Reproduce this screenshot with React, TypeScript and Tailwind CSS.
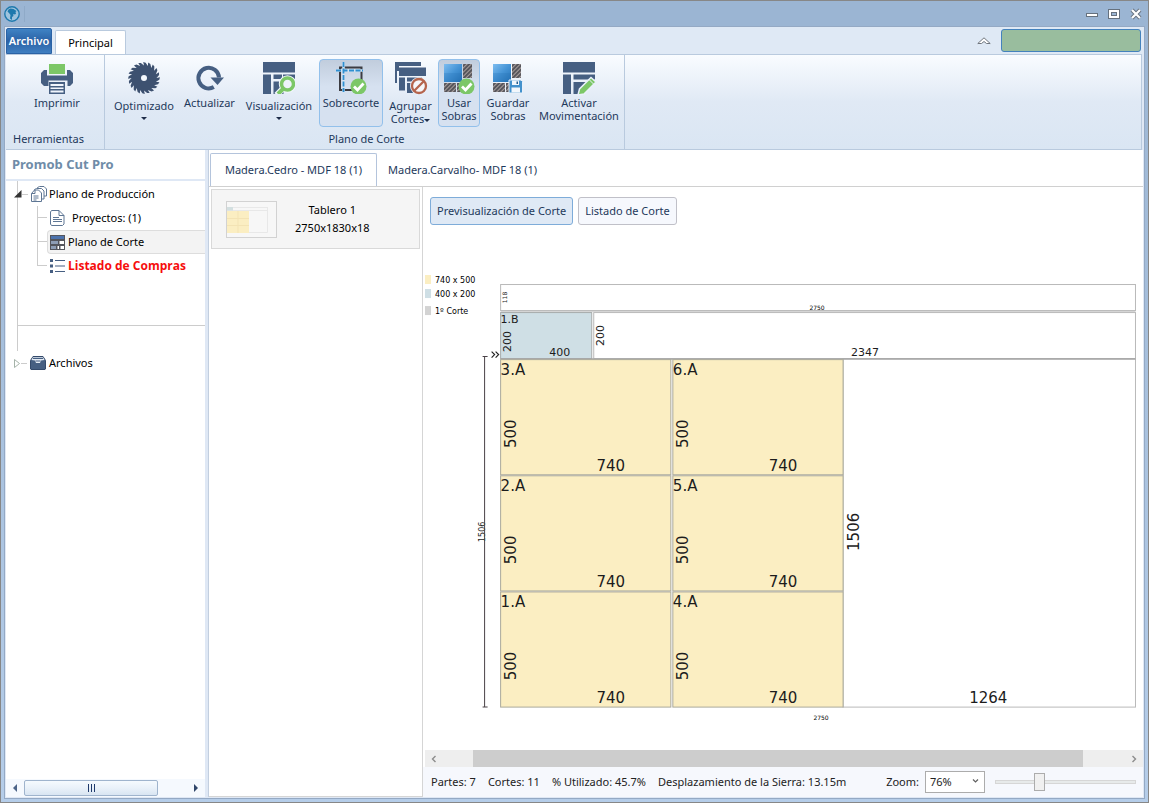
import React, { useState } from 'react';

const NAVY = '#465f82';

const PrinterIcon = () => (
  <svg width="32" height="32" viewBox="0 0 32 32">
    <rect x="8" y="2" width="16" height="10" fill="#7cc767" />
    <path d="M3 8h3v5.500h20V8h3l3 3v10l-3 3h-2.500v-5.500h-19V24H3l-3-3V11z" fill={NAVY} />
    <path d="M8 20h16v12H8z" fill={NAVY} />
    <path d="M9.500 22h13v2h-13zM9.500 25.500h13v1.500h-13zM9.500 28.500h13v2h-13z" fill="#f0f5fc" />
  </svg>
);

const SAW_TEETH = 20;

const sawPath = Array.from({ length: SAW_TEETH }, (_, i) => {
  const a = (i / SAW_TEETH) * Math.PI * 2;
  const b = a + (Math.PI * 2 / SAW_TEETH) * 0.35;
  const point = (angle: number, r: number) =>
    `${(16 + Math.cos(angle) * r).toFixed(2)} ${(16 + Math.sin(angle) * r).toFixed(2)}`;
  return `${i === 0 ? 'M' : 'L'}${point(a, 12.5)}L${point(a - 0.05, 16)}L${point(b, 15.4)}`;
}).join('') + 'Z';

const SawIcon = () => (
  <svg width="32" height="32" viewBox="0 0 32 32">
    <path d={sawPath} fill="#3d5170" />
    <circle cx="16" cy="16" r="3" fill="#f4f8fd" />
  </svg>
);

const RefreshIcon = () => (
  <svg width="32" height="32" viewBox="0 0 32 32">
    <path d="M19.800 25.100A10.300 10.300 0 1 1 25 15.500" fill="none" stroke={NAVY} strokeWidth="4" />
    <path d="M16.500 15.500h13.500l-6.500 7.500z" fill={NAVY} />
  </svg>
);

const ViewIcon = () => (
  <svg width="32" height="32" viewBox="0 0 32 32">
    <path d="M0 0h32v10.500H0zM0 12.500h8v19.500H0zM10.500 12.500H19v4.500h-8.500zM20 12.500h12v5H20zM10.500 19.500h10V32h-10z" fill={NAVY} />
    <circle cx="24.500" cy="22" r="6" fill="none" stroke="#f3f7fd" strokeWidth="5.500" />
    <path d="M20.500 26l-7 7" stroke="#f3f7fd" strokeWidth="6" />
    <circle cx="24.500" cy="22" r="6" fill="#edf3fb" stroke="#7cc767" strokeWidth="3.500" />
    <path d="M20.500 26.500L15 32" stroke="#7cc767" strokeWidth="4" />
  </svg>
);

const CheckBadge = () => (
  <>
    <circle cx="23.500" cy="24.500" r="8" fill="#7cc767" />
    <path d="M19 24.500l3.500 3.500 6-6.500" fill="none" stroke="#fff" strokeWidth="2.800" />
  </>
);

const OvercutIcon = () => (
  <svg width="32" height="32" viewBox="0 0 32 32">
    <path d="M5 5.500h21.500V28H5z" fill="none" stroke="#3c3c42" strokeWidth="2" />
    <path d="M8.500 0v30M1 8.500h27" fill="none" stroke="#d3e4f3" strokeWidth="2.500" />
    <path d="M8.500 0v30M1 8.500h27" fill="none" stroke="#2f8fd0" strokeWidth="1.800" strokeDasharray="5 1.500" />
    <CheckBadge />
  </svg>
);

const GroupCutsIcon = () => (
  <svg width="34" height="34" viewBox="0 0 34 34">
    <path d="M1 0h26v4H5v5H3v12H1z" fill={NAVY} />
    <path d="M5 5.500h27v8.500H5zM5 15.500h6v13H5zM13 15.500h15v4H13zM13 21h6v10h-6z" fill={NAVY} />
    <circle cx="25" cy="24" r="9" fill="#eaf1fa" />
    <circle cx="25" cy="24" r="7" fill="#f5f7fa" stroke="#b5654d" strokeWidth="2.300" />
    <path d="M20 29L30 19" stroke="#b5654d" strokeWidth="2.300" />
  </svg>
);

const Hatch = ({ x, y, w, h }: { x: number; y: number; w: number; h: number }) => (
  <>
    <rect x={x} y={y} width={w} height={h} fill="#57565c" />
    <rect x={x} y={y} width={w} height={h} fill="url(#hatch)" />
  </>
);

const LeftoverBase = () => (
  <>
    <defs>
      <pattern id="hatch" width="3" height="3" patternUnits="userSpaceOnUse" patternTransform="rotate(45)">
        <rect width="1" height="3" fill="#aaa09e" />
      </pattern>
      <linearGradient id="sheet" x1="0" y1="0" x2="1" y2="1">
        <stop offset="0" stopColor="#7dbdf0" />
        <stop offset="0.500" stopColor="#4594d6" />
        <stop offset="1" stopColor="#2370b4" />
      </linearGradient>
    </defs>
    <rect x="1" y="2" width="18" height="18" fill="url(#sheet)" />
    <path d="M1 11h18v9H1z" fill="#2370b4" opacity="0.250" />
    <Hatch x={20} y={2} w={9} h={14} />
    <Hatch x={1} y={21} w={12} h={9} />
    <Hatch x={14} y={21} w={5} h={9} />
  </>
);

const UseLeftoversIcon = () => (
  <svg width="32" height="32" viewBox="0 0 32 32">
    <LeftoverBase />
    <CheckBadge />
  </svg>
);

const SaveLeftoversIcon = () => (
  <svg width="32" height="32" viewBox="0 0 32 32">
    <LeftoverBase />
    <path d="M17 18h12l1.500 1.500V31H17z" fill="#4391cc" stroke="#e8f0fa" />
    <path d="M20 18.500h7V23h-7zM19.500 25.500h8.500V30.500h-8.500z" fill="#f2f7fc" />
    <path d="M24.500 19.500h1.500v2.500h-1.500z" fill="#245e90" />
  </svg>
);

const MoveIcon = () => (
  <svg width="34" height="34" viewBox="0 0 34 34">
    <path d="M1 0h32v10.500H1zM1 12.500h8v19.500H1zM11.500 12.500H33v5H11.500zM11.500 20h13v4l-6 8h-7z" fill={NAVY} />
    <path d="M16 33l1.500-6L29 15.500l5 4.500-12 12z" fill="#7cc767" stroke="#eaf1fa" strokeWidth="1.500" />
    <path d="M27 17.500l4.500 4.500" stroke="#eaf1fa" />
  </svg>
);

const AppLogo = () => (
  <svg width="16" height="16" viewBox="0 0 16 16">
    <circle cx="8" cy="8" r="7.200" fill="#9ec3dd" stroke="#1e79ad" strokeWidth="1.400" />
    <path d="M3.500 5.500l1-2 2-1 3 .5 3 2-1 1 .5 2-2 .500-1-.500.500 2-1.500 1v3L6 12.500 6.500 9 5 7z" fill="#1e79ad" />
  </svg>
);

const PagesIcon = () => (
  <svg width="16" height="16" viewBox="0 0 16 16" fill="#fff" stroke="#5e7694">
    <path d="M6.500 1.500l2-1h4.500l2.500 2.500v7h-9z" />
    <path d="M3.500 3.500l2-1h5l2.500 2.500v8h-9z" />
    <path d="M.5 7.500l3-3.500h4L10.500 7v8.500H.5z" />
    <path d="M.5 7.500H4V4M2.500 10h5M2.500 12h5M2.500 14h3" fill="none" />
  </svg>
);

const PageIcon = () => (
  <svg width="15" height="16" viewBox="0 0 15 16" fill="#fff" stroke="#5e7694">
    <path d="M1.500.5h7.500l5 5v8.500l-1.500 1.500h-11L.5 14V2z" />
    <path d="M9 .5v5h5M3 7.500h6M3 9.500h9M3 11.500h9" fill="none" />
  </svg>
);

const LayoutIcon = () => (
  <svg width="15" height="15" viewBox="0 0 15 15">
    <rect width="15" height="15" fill="#54555c" />
    <path d="M1 1h13v3H1z" fill="#4d73ad" />
    <path d="M1 6h7v3H1zM1 11h5v3H1z" fill="#8e9db5" />
    <path d="M9.500 6h4.500v3H9.500zM7.500 11H9v3H7.500zM10.500 11H14v3h-3.500z" fill="#fff" />
  </svg>
);

const ListIcon = () => (
  <svg width="15" height="14" viewBox="0 0 15 14" fill={NAVY}>
    <path d="M0 0h3v3H0zM0 5.500h3v3H0zM0 11h3v3H0zM5 1h10v1H5zM5 6.500h10v1H5zM5 12h10v1H5z" />
  </svg>
);

const ArchiveIcon = () => (
  <svg width="16" height="14" viewBox="0 0 16 14">
    <path d="M3 .5h10l2.500 4v8.500l-.5.500H1l-.5-.5V4.500z" fill={NAVY} stroke="#344a6b" />
    <path d="M3 1.200h10l1.500 2.800-3.500.5L10 7H6L5 4.500 1.500 4z" fill="#e4ebf4" />
    <path d="M3 2.500h10M5.500 5h5" stroke={NAVY} strokeWidth="1.200" />
  </svg>
);

const Caret = () => (
  <svg width="6" height="3" viewBox="0 0 6 3" className="inline-block align-middle">
    <path d="M0 0h6L3 3z" fill="#1e2c48" />
  </svg>
);

type Tool = {
  label: string[];
  icon: React.ReactNode;
  width: string;
  active?: boolean;
  menu?: 'below' | 'inline';
};

const cutTools: Tool[] = [
  { label: ['Optimizado'], icon: <SawIcon />, width: 'w-[66px]', menu: 'below' },
  { label: ['Actualizar'], icon: <RefreshIcon />, width: 'w-[59px]' },
  { label: ['Visualización'], icon: <ViewIcon />, width: 'w-[74px]', menu: 'below' },
  { label: ['Sobrecorte'], icon: <OvercutIcon />, width: 'w-[64px]', active: true },
  { label: ['Agrupar', 'Cortes'], icon: <GroupCutsIcon />, width: 'w-[49px]', menu: 'inline' },
  { label: ['Usar', 'Sobras'], icon: <UseLeftoversIcon />, width: 'w-[42px]', active: true },
  { label: ['Guardar', 'Sobras'], icon: <SaveLeftoversIcon />, width: 'w-[50px]' },
  { label: ['Activar', 'Movimentación'], icon: <MoveIcon />, width: 'w-[86px]' },
];

const ToolButton = ({ tool }: { tool: Tool }) => (
  <button
    className={`flex h-[68px] shrink-0 flex-col items-center rounded-sm border pt-0.5 leading-[13px] whitespace-nowrap ${tool.width} ${
      tool.active
        ? 'border-[#92c0eb] bg-linear-to-b from-[#c1cddd] to-[#d6e1f0] to-40%'
        : 'border-transparent'
    }`}
  >
    <span className="flex h-8 items-start justify-center">{tool.icon}</span>
    <span className={tool.menu ? 'mt-[5px]' : 'mt-0.5'}>
      {tool.label.map((line, i) => (
        <span key={line} className="block">
          {line}
          {tool.menu === 'inline' && i === tool.label.length - 1 && <Caret />}
        </span>
      ))}
    </span>
    {tool.menu === 'below' && <span className="mt-[5px] flex"><Caret /></span>}
  </button>
);

const TitleBar = () => (
  <header className="flex h-[25px] shrink-0 items-center justify-between bg-[#9bb5d3] px-[3px]">
    <div className="flex items-center gap-1">
      <AppLogo />
      <span className="h-4 w-px bg-[#8faac8]" />
    </div>
    <div className="flex items-center gap-2 pr-0.5">
      <button aria-label="Minimizar">
        <svg width="14" height="12" viewBox="0 0 14 12">
          <rect x="1.500" y="5.500" width="11" height="3" fill="#fff" stroke="#66717e" />
        </svg>
      </button>
      <button aria-label="Maximizar">
        <svg width="14" height="12" viewBox="0 0 14 12">
          <rect x="1.500" y="1.500" width="11" height="9" fill="#fff" stroke="#66717e" />
          <rect x="4.500" y="4.500" width="5" height="3" fill="#9bb5d3" stroke="#66717e" />
        </svg>
      </button>
      <button aria-label="Cerrar">
        <svg width="14" height="12" viewBox="0 0 14 12">
          <path d="M3 2l8 8M11 2l-8 8" stroke="#66717e" strokeWidth="4" />
          <path d="M3 2l8 8M11 2l-8 8" stroke="#fff" strokeWidth="2.200" />
        </svg>
      </button>
    </div>
  </header>
);

const Ribbon = () => (
  <div className="shrink-0 text-[#1e395b]">
    <div className="flex h-[27px] items-end bg-[#dfe9f5] pr-0.5">
      <button className="mr-[3px] h-[26px] w-[46px] rounded-t-xs border border-[#2a62a5] bg-linear-to-b from-[#3f83c4] via-[#2b62a6] to-[#3f7fc1] font-semibold text-white">
        Archivo
      </button>
      <button className="h-6 w-[71px] rounded-t-xs border border-b-0 border-[#b9cade] bg-white text-black">
        Principal
      </button>
      <div className="ml-auto flex items-center gap-2.5 pb-0.5">
        <button aria-label="Contraer la cinta">
          <svg width="14" height="8" viewBox="0 0 14 8">
            <path d="M.8 6.500L7 .8l6.200 5.700H9.500L7 4.500l-2.500 2z" fill="#fff" stroke="#70767e" />
          </svg>
        </button>
        <div className="h-[23px] w-[140px] rounded-[3px] border border-[#4482bd] bg-[#99bd9e]" />
      </div>
    </div>
    <div className="mr-px flex h-[96px] border-y border-r border-[#b9cade] bg-linear-to-b from-[#f9fcff] via-[#e0e9f5] to-[#dae6f3]">
      <section className="flex w-[99px] shrink-0 flex-col border-r border-[#b9cade] pt-1">
        <div className="pl-[19px]">
          <ToolButton tool={{ label: ['Imprimir'], icon: <PrinterIcon />, width: 'w-[64px]' }} />
        </div>
        <h2 className="mt-1 pl-[7px]">Herramientas</h2>
      </section>
      <section className="flex shrink-0 flex-col border-r border-[#b9cade] px-0.5 pt-1 pl-1.5">
        <div className="flex gap-[3px]">
          {cutTools.map((tool) => <ToolButton key={tool.label.join(' ')} tool={tool} />)}
        </div>
        <h2 className="mt-1 text-center">Plano de Corte</h2>
      </section>
    </div>
  </div>
);

const branch = [
  { label: 'Proyectos: (1)', icon: <PageIcon />, style: 'gap-[7px] pl-[3px]' },
  { label: 'Plano de Corte', icon: <LayoutIcon />, style: 'gap-[3px] rounded-l-sm border border-r-0 border-[#dddddd] bg-[#f3f3f3] pl-0.5' },
  { label: 'Listado de Compras', icon: <ListIcon />, style: "gap-[3px] pl-[3px] font-['Open_Sans',sans-serif] text-[12px] font-bold text-[#f60d0d]" },
];

const Sidebar = () => (
  <aside className="flex w-[202px] shrink-0 flex-col border-r-[3px] border-[#dfe8f5] bg-white">
    <h1 className="border-b-2 border-[#dfe8f5] px-1.5 text-[13px] leading-[29px] font-bold text-[#6f8ca8]">Promob Cut Pro</h1>
    <nav className="ml-[11px] text-black">
      <div className="h-[145px] border-b border-l border-[#cccccc] pt-px">
        <div className="flex h-6 items-center">
          <button aria-label="Contraer" className="-ml-1">
            <svg width="8" height="8" viewBox="0 0 8 8"><path d="M7.500 0v7.500H0z" fill="#333" /></svg>
          </button>
          <span className="mr-[3px] h-px w-1.5 bg-[#cccccc]" />
          <PagesIcon />
          <a href="#produccion" className="ml-0.5">Plano de Producción</a>
        </div>
        <ul className="ml-[19px]">
          {branch.map((item, i) => (
            <li key={item.label} className="flex h-6 items-stretch">
              <span className="flex w-2.5 flex-col">
                <span className="h-1/2 border-b border-l border-[#cccccc]" />
                {i < branch.length - 1 && <span className="flex-1 border-l border-[#cccccc]" />}
              </span>
              <a href={`#rama-${i}`} className={`flex flex-1 items-center whitespace-nowrap ${item.style}`}>
                {item.icon}
                {item.label}
              </a>
            </li>
          ))}
        </ul>
      </div>
      <div className="h-[25px] border-l border-[#cccccc]" />
      <div className="flex h-6 items-center">
        <button aria-label="Expandir" className="-ml-[3px]">
          <svg width="7" height="9" viewBox="0 0 7 9"><path d="M.5.5v8l5-4z" fill="#fff" stroke="#a5b3a9" /></svg>
        </button>
        <span className="mr-[3px] h-px w-1.5 bg-[#cccccc]" />
        <ArchiveIcon />
        <a href="#archivos" className="ml-[3px]">Archivos</a>
      </div>
    </nav>
    <div className="mt-auto flex h-[18px] items-center bg-[#f5f9fe] px-[7px]">
      <button aria-label="Desplazar a la izquierda">
        <svg width="4" height="8" viewBox="0 0 4 8"><path d="M4 0v8L0 4z" fill="#4c6488" /></svg>
      </button>
      <div className="mr-auto ml-[7px] flex h-4 w-[134px] items-center justify-center gap-0.5 rounded-xs border border-[#9fb4cd] bg-linear-to-b from-[#f5fafe] via-[#e9f1f9] to-[#d9e5f2]">
        <span className="h-2 w-px bg-[#1f3a6c]" />
        <span className="h-2 w-px bg-[#1f3a6c]" />
        <span className="h-2 w-px bg-[#1f3a6c]" />
      </div>
      <button aria-label="Desplazar a la derecha">
        <svg width="4" height="8" viewBox="0 0 4 8"><path d="M0 0v8l4-4z" fill="#2f4569" /></svg>
      </button>
    </div>
  </aside>
);

// Board pieces, in drawing units from the board's top left corner
const pieces = [
  { name: '3.A', x: 0, y: 75 },
  { name: '6.A', x: 172, y: 75 },
  { name: '2.A', x: 0, y: 191 },
  { name: '5.A', x: 172, y: 191 },
  { name: '1.A', x: 0, y: 307 },
  { name: '4.A', x: 172, y: 307 },
];

const VText = ({ x, y, size, children }: { x: number; y: number; size: number; children: string }) => (
  <text transform={`translate(${x} ${y}) rotate(-90)`} fontSize={size} textAnchor="middle">{children}</text>
);

const CuttingPlan = () => (
  <svg viewBox="0 0 719 470" className="w-full font-['DejaVu_Sans',sans-serif]" fill="#1c1c1c">
    <g fontSize="8" fill="#000">
      <rect x="2" y="6" width="6" height="9" fill="#fbeec2" />
      <text x="12" y="14">740 x 500</text>
      <rect x="2" y="20" width="6" height="9" fill="#cfdfe5" />
      <text x="12" y="28">400 x 200</text>
      <rect x="2" y="37" width="6" height="9" fill="#d3d3d3" />
      <text x="12" y="45">1º Corte</text>
    </g>
    <g transform="translate(77.500 15.500)">
      <g fill="#fff" stroke="#b9b9b9">
        <rect x="0" y="0" width="634" height="26" />
        <rect x="93" y="28" width="541" height="46" />
        <rect x="342" y="74" width="292" height="348" />
      </g>
      <rect x="0" y="26.500" width="634" height="1" fill="#d3d3d3" />
      <rect x="0" y="28" width="91" height="46" fill="#cfdfe5" stroke="#a7abab" />
      <path d="M0 74.500h634" stroke="#a5a5a5" strokeWidth="1.500" />
      {pieces.map((piece) => (
        <g key={piece.name} fontSize="15">
          <rect x={piece.x} y={piece.y} width="170" height="115" fill="#fbeec2" stroke="#aaa99c" />
          <text x={piece.x} y={piece.y + 15}>{piece.name}</text>
          <text x={piece.x + 110} y={piece.y + 111} textAnchor="middle">740</text>
          <VText x={piece.x + 15} y={piece.y + 74} size={15}>500</VText>
        </g>
      ))}
      <text x="0" y="38" fontSize="11">1.B</text>
      <text x="59" y="71" fontSize="11" textAnchor="middle">400</text>
      <VText x={10} y={57} size={11}>200</VText>
      <VText x={103} y={51} size={11}>200</VText>
      <text x="364" y="71" fontSize="11" textAnchor="middle">2347</text>
      <text x="487" y="418" fontSize="15" textAnchor="middle">1264</text>
      <VText x={358} y={247} size={15}>1506</VText>
      <text x="316" y="25" fontSize="6" fill="#000" textAnchor="middle">2750</text>
      <text x="320" y="435" fontSize="6" fill="#000" textAnchor="middle">2750</text>
      <VText x={6} y={13} size={6}>118</VText>
      <VText x={-16} y={247} size={8}>1506</VText>
      <path d="M-18 72h5M-18 422h5M-16 72v350" fill="none" stroke="#4b4348" />
      <path d="M-9 67l3 3-3 3M-5 67l3 3-3 3" fill="none" stroke="#222" strokeWidth="1.200" />
    </g>
  </svg>
);

const BoardThumbnail = () => (
  <svg width="51" height="37" viewBox="0 0 51 37">
    <rect x=".5" y=".5" width="50" height="36" fill="#f7f7f7" stroke="#d2d2d2" />
    <path d="M1 6.500h41M1 9.500h41M41.500 6v25.500H23" fill="none" stroke="#e8e8e8" />
    <rect x="1" y="6" width="6" height="3.500" fill="#d3dfe0" />
    <rect x="1" y="10" width="22" height="22" fill="#fbeec2" />
    <path d="M1 17.500h22M1 24.500h22M12 10v22" stroke="#f3e3b4" />
  </svg>
);

const StatusBar = () => {
  const [zoom, setZoom] = useState(76);

  return (
    <footer className="flex h-[30px] items-center bg-[#f6f8fd] pr-[7px] pl-2 whitespace-nowrap text-[#222]">
      <span>Partes: 7</span>
      <span className="ml-3">Cortes: 11</span>
      <span className="ml-3">% Utilizado: 45.7%</span>
      <span className="ml-3">Desplazamiento de la Sierra: 13.15m</span>
      <label htmlFor="zoom" className="ml-auto">Zoom:</label>
      <div className="relative ml-1.5">
        <select
          id="zoom"
          value={zoom}
          onChange={(e) => setZoom(Number(e.target.value))}
          className="h-[22px] w-[60px] appearance-none border border-[#acacac] bg-white pl-1"
        >
          {[50, 76, 100, 150].map((value) => <option key={value} value={value}>{value}%</option>)}
        </select>
        <svg width="7" height="5" viewBox="0 0 7 5" className="pointer-events-none absolute top-2 right-1.5">
          <path d="M1 .5l2.500 2.500L6 .5" fill="none" stroke="#606060" strokeWidth="1.200" />
        </svg>
      </div>
      <input
        type="range"
        aria-label="Zoom"
        min="0"
        max="100"
        defaultValue="30"
        className="ml-2.5 h-5 w-[141px] appearance-none bg-transparent [&::-webkit-slider-runnable-track]:h-1 [&::-webkit-slider-runnable-track]:border [&::-webkit-slider-runnable-track]:border-[#d6d6d6] [&::-webkit-slider-runnable-track]:bg-[#e7eaea] [&::-webkit-slider-thumb]:-mt-2 [&::-webkit-slider-thumb]:h-[18px] [&::-webkit-slider-thumb]:w-[11px] [&::-webkit-slider-thumb]:appearance-none [&::-webkit-slider-thumb]:border [&::-webkit-slider-thumb]:border-[#acacac] [&::-webkit-slider-thumb]:bg-[#f0f0f0]"
      />
    </footer>
  );
};

const Workspace = () => (
  <main className="flex min-w-0 flex-1 flex-col border-l border-[#c3cfdf] bg-white">
    <div className="flex h-[37px] shrink-0 items-end border-b border-[#d0d0d0] pl-px text-[#1e395b]">
      <button className="h-[33px] w-[167px] rounded-t-xs border border-b-0 border-[#b4c4dc] bg-white">Madera.Cedro - MDF 18 (1)</button>
      <button className="h-[33px] px-[11px]">Madera.Carvalho- MDF 18 (1)</button>
    </div>
    <div className="flex min-h-0 flex-1">
      <div className="w-[214px] shrink-0 border-r border-b border-[#d5d5d5] px-0.5 pt-0.5">
        <button className="flex h-[60px] w-full items-center border border-[#d9d9d9] bg-[#f5f5f5] pl-3.5 text-black">
          <BoardThumbnail />
          <span className="ml-[18px] leading-[18px]">
            Tablero 1
            <br />
            2750x1830x18
          </span>
        </button>
      </div>
      <div className="flex min-w-0 flex-1 flex-col">
        <div className="flex shrink-0 gap-[5px] px-[7px] pt-2.5 text-[#1e395b]">
          <button className="h-7 rounded-[3px] border border-[#7eacd9] bg-[#dfe9f5] px-1.5">Previsualización de Corte</button>
          <button className="h-7 rounded-[3px] border border-[#c0c0c8] bg-[#f6f8fd] px-1.5">Listado de Corte</button>
        </div>
        <div className="min-h-0 flex-1 overflow-hidden pt-11">
          <CuttingPlan />
        </div>
        <div className="ml-0.5 flex h-[17px] shrink-0 items-center bg-[#eeeeee]">
          <button aria-label="Anterior" className="flex w-12 pl-1.5">
            <svg width="6" height="8" viewBox="0 0 6 8"><path d="M4.500 1L1.500 4l3 3" fill="none" stroke="#8c8c8c" strokeWidth="1.400" /></svg>
          </button>
          <div className="h-full flex-1 bg-[#cdcdcd]" />
          <button aria-label="Siguiente" className="flex w-[60px] justify-end pr-1.5">
            <svg width="6" height="8" viewBox="0 0 6 8"><path d="M1.500 1l3 3-3 3" fill="none" stroke="#8c8c8c" strokeWidth="1.400" /></svg>
          </button>
        </div>
        <StatusBar />
      </div>
    </div>
  </main>
);

const App = () => (
  <div className="flex h-screen min-h-[600px] flex-col border border-[#878787] bg-linear-to-b from-[#9bb5d3] to-[#b5cde9] font-['Noto_Sans','Open_Sans',sans-serif] text-[11px] leading-4">
    <TitleBar />
    <div className="mx-[3px] mb-[3px] flex min-h-0 flex-1 flex-col border border-[#94a9c4] bg-[#dfe8f5] px-px pb-px">
      <Ribbon />
      <div className="flex min-h-0 flex-1">
        <Sidebar />
        <Workspace />
      </div>
    </div>
  </div>
);

export default App;
